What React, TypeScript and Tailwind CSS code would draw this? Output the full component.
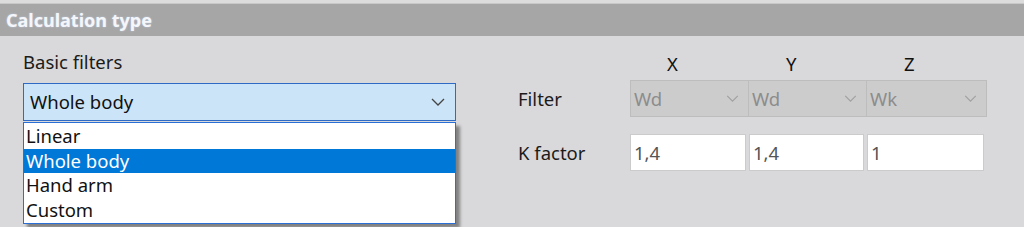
const font = "font-['Segoe_UI','Noto_Sans','Open_Sans',sans-serif]";

const options = ["Linear", "Whole body", "Hand arm", "Custom"];
const axes = [
  { name: "X", filter: "Wd", k: "1,4" },
  { name: "Y", filter: "Wd", k: "1,4" },
  { name: "Z", filter: "Wk", k: "1" },
];

function Chevron({ className }: { className?: string }) {
  return (
    <svg viewBox="0 0 14 8" className={className} fill="none" stroke="currentColor" strokeWidth="1.3">
      <path d="M1 1l6 6 6-6" />
    </svg>
  );
}

function BasicFilters() {
  return (
    <div className="flex w-[433px] flex-col">
      <p className="h-[47px] pt-[13px] text-[18.5px] leading-[25px] text-[#1b1b1b]">Basic filters</p>
      <div className="relative">
        <div className="flex h-[38px] items-center justify-between border border-[#2f6bc4] bg-[#cce4f7] pl-[6px] pr-[10px]">
          <span className="text-[18.5px] text-[#111]">Whole body</span>
          <Chevron className="h-[8px] w-[14px] text-[#444]" />
        </div>
        <ul className="absolute left-0 top-[39px] z-10 w-full border border-[#2a6fd6] bg-white py-px shadow-[4px_4px_3px_rgba(0,0,0,0.4)]">
          {options.map((o) => (
            <li
              key={o}
              className={
                o === "Whole body"
                  ? "flex h-[24.5px] items-center bg-[#0078d7] pl-[2px] text-[18.5px] text-white"
                  : "flex h-[24.5px] items-center pl-[2px] text-[18.5px] text-[#111]"
              }
            >
              {o}
            </li>
          ))}
        </ul>
      </div>
    </div>
  );
}

function AxisTable() {
  return (
    <div className="ml-[62px] grid grid-cols-[112px_119px_118px_120px] grid-rows-[44px_37px_17px_37px]">
      <div />
      {axes.map((a) => (
        <div key={a.name} className="pl-[37px] pt-[16px] text-[18.5px] leading-[24px] text-[#111]">
          {a.name}
        </div>
      ))}

      <div className="flex items-center text-[18.5px] text-[#1b1b1b]">Filter</div>
      {axes.map((a, i) => (
        <div
          key={a.name}
          className={
            i === 0
              ? "flex items-center justify-between border border-[#bdbdbd] bg-[#cccccc] pl-[3px] pr-[9px]"
              : "flex items-center justify-between border border-l-0 border-[#bdbdbd] bg-[#cccccc] pl-[3px] pr-[9px]"
          }
        >
          <span className="text-[18.5px] text-[#8c8c8c]">{a.filter}</span>
          <Chevron className="h-[7px] w-[13px] text-[#a0a0a0]" />
        </div>
      ))}

      <div className="col-span-4" />

      <div className="flex items-center text-[18.5px] text-[#1b1b1b]">K factor</div>
      {axes.map((a) => (
        <div key={a.name} className="mr-[3px] flex items-center border border-[#cbcbcb] bg-white pl-[3px] text-[18.5px] text-[#555]">
          {a.k}
        </div>
      ))}
    </div>
  );
}

export default function App() {
  return (
    <div className={`${font} h-[227px] w-[1024px] overflow-hidden bg-[#d9d8da]`}>
      <div className="h-[4px] border-b border-[#c8c8c8] bg-[#dcdcdc]" />
      <div className="flex h-[32px] items-center bg-[#a6a6a6] pl-[6px]">
        <h1 className="text-[18px] font-bold text-[#f4f6fa] [text-shadow:0_0_2px_rgba(200,220,255,0.7)]">Calculation type</h1>
      </div>
      <div className="flex pl-[23px]">
        <BasicFilters />
        <AxisTable />
      </div>
    </div>
  );
}
